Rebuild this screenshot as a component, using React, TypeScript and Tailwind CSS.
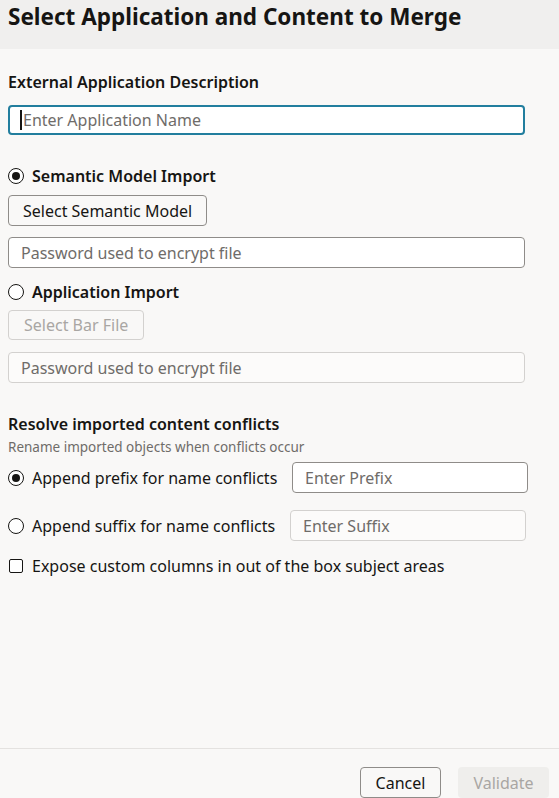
const font = { fontFamily: '"Noto Sans", "Liberation Sans", sans-serif' };

function Radio({ checked }: { checked?: boolean }) {
  return (
    <span className="flex size-[16px] shrink-0 items-center justify-center rounded-full border-[1.5px] border-[#161513] bg-white">
      {checked && <span className="size-[8px] rounded-full bg-[#161513]" />}
    </span>
  );
}

function TextField({
  placeholder,
  muted,
  className = '',
}: {
  placeholder: string;
  muted?: boolean;
  className?: string;
}) {
  return (
    <div
      className={`flex h-[31px] items-center rounded-[4px] border px-3 text-[16px] text-[#6f6c69] ${
        muted ? 'border-[#d3d1cf] bg-[#fcfbfa]' : 'border-[#8f8c89] bg-white'
      } ${className}`}
    >
      {placeholder}
    </div>
  );
}

export default function App() {
  return (
    <div className="flex h-[798px] w-[559px] flex-col bg-[#f9f8f7] text-[#161513]" style={font}>
      <div className="flex h-[49px] shrink-0 items-start bg-[#f0efee] px-2 pt-[2px]">
        <h1 className="text-[22.5px] font-bold leading-[30px]">Select Application and Content to Merge</h1>
      </div>

      <div className="flex flex-1 flex-col px-2 pt-[22px]">
        <h2 className="text-[16px] font-semibold leading-[22px]">External Application Description</h2>
        <div className="mt-[12px] flex h-[30px] w-[517px] items-center rounded-[4px] border-2 border-[#227e9e] bg-white pl-[10px] text-[16px] text-[#6f6c69]">
          <span className="mr-[1px] h-[20px] w-[2px] bg-[#161513]" />
          Enter Application Name
        </div>

        <label className="mt-[30px] flex items-center gap-[8px]">
          <Radio checked />
          <span className="text-[16px] font-semibold leading-[22px]">Semantic Model Import</span>
        </label>
        <div className="mt-[8px]">
          <button className="h-[31px] rounded-[4px] border border-[#8f8c89] bg-[#f9f8f7] px-[14px] text-[16px] text-[#161513]">
            Select Semantic Model
          </button>
        </div>
        <TextField placeholder="Password used to encrypt file" className="mt-[11px] w-[517px]" />

        <label className="mt-[13px] flex items-center gap-[8px]">
          <Radio />
          <span className="text-[16px] font-semibold leading-[22px]">Application Import</span>
        </label>
        <div className="mt-[7px]">
          <button className="h-[30px] rounded-[4px] border border-[#d3d1cf] bg-[#f9f8f7] px-[15px] text-[16px] text-[#a9a6a3]">
            Select Bar File
          </button>
        </div>
        <TextField placeholder="Password used to encrypt file" muted className="mt-[12px] w-[517px]" />

        <h2 className="mt-[30px] text-[16px] font-semibold leading-[22px]">Resolve imported content conflicts</h2>
        <p className="mt-[3px] text-[13.5px] leading-[18px] text-[#6f6c69]">Rename imported objects when conflicts occur</p>

        <div className="mt-[6px] flex items-center">
          <label className="flex w-[284px] items-center gap-[8px]">
            <Radio checked />
            <span className="text-[16px]">Append prefix for name conflicts</span>
          </label>
          <TextField placeholder="Enter Prefix" className="w-[236px]" />
        </div>

        <div className="mt-[17px] flex items-center">
          <label className="flex w-[282px] items-center gap-[8px]">
            <Radio />
            <span className="text-[16px]">Append suffix for name conflicts</span>
          </label>
          <TextField placeholder="Enter Suffix" muted className="w-[236px]" />
        </div>

        <label className="mt-[13px] flex items-center gap-[9px]">
          <span className="ml-[1px] size-[14px] shrink-0 rounded-[2px] border-[1.5px] border-[#161513] bg-white" />
          <span className="text-[16px]">Expose custom columns in out of the box subject areas</span>
        </label>
      </div>

      <div className="flex h-[50px] shrink-0 items-end justify-end gap-[17px] border-t border-[#e4e2e0] pr-[10px]">
        <button className="h-[31px] w-[81px] rounded-[4px] border border-[#8f8c89] bg-[#f9f8f7] text-[16px] text-[#161513]">
          Cancel
        </button>
        <button className="h-[31px] w-[91px] rounded-[4px] bg-[#efeeec] text-[16px] text-[#a9a6a3]">
          Validate
        </button>
      </div>
    </div>
  );
}
